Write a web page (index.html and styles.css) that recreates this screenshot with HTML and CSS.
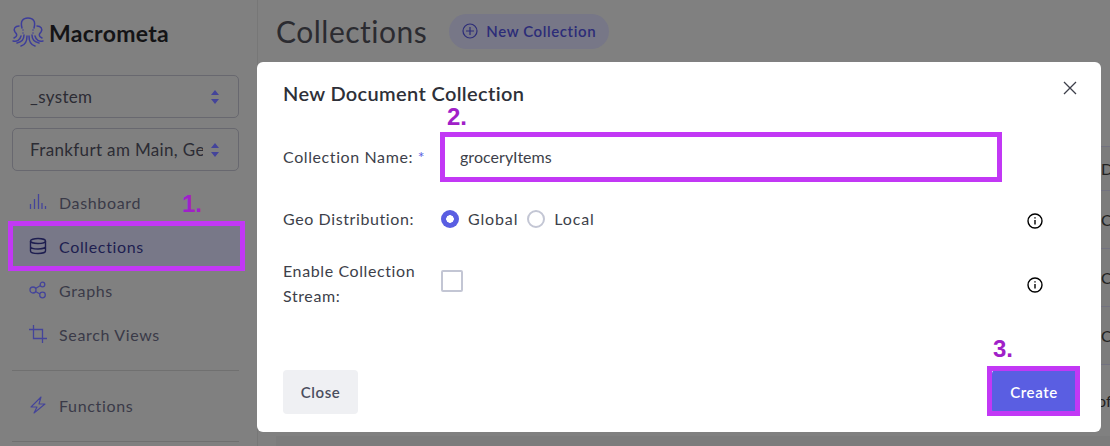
FILE: index.html
```html
<!DOCTYPE html>
<html lang="en">
<head>
    <meta charset="UTF-8">
    <meta name="viewport" content="width=device-width, initial-scale=1.0">
    <title>Macrometa Collections</title>
    <link rel="stylesheet" href="styles.css">
</head>
<body>
    <div class="app">
        <aside class="sidebar">
            <div class="logo">
                <svg class="logo-icon" viewBox="0 0 36 36" fill="none" stroke="currentColor" stroke-width="1.500" stroke-linecap="round">
                    <path d="M12 13C10 6 13 3 18 3s8 3 6 10"/>
                    <path d="M9 11C5 11 3 14 5 17c2 2 3 4-1 6"/>
                    <path d="M27 11c4 0 6 3 4 6-2 2-3 4 1 6"/>
                    <path d="M3 26c4 1 7-1 8-5"/>
                    <path d="M33 26c-4 1-7-1-8-5"/>
                    <path d="M14 20c0 4-2 7-7 8"/>
                    <path d="M22 20c0 4 2 7 7 8"/>
                    <path d="M17 21c0 5-2 9-6 10"/>
                    <path d="M19 21c0 5 2 9 6 10"/>
                    <path d="M13 15v.1M13 18v.1M23 15v.1M23 18v.1"/>
                </svg>
                <span class="logo-text">Macrometa</span>
            </div>
            <div class="picker">
                <span class="picker-text">_system</span>
                <svg class="picker-arrows" viewBox="0 0 10 16"><path d="M5 1l4 5H1zM5 15l4-5H1z"/></svg>
            </div>
            <div class="picker">
                <span class="picker-text">Frankfurt am Main, Germany</span>
                <svg class="picker-arrows" viewBox="0 0 10 16"><path d="M5 1l4 5H1zM5 15l4-5H1z"/></svg>
            </div>
            <nav class="nav">
                <a class="nav-item">
                    <svg class="nav-icon" viewBox="0 0 18 18" fill="none" stroke="currentColor" stroke-width="1.300"><path d="M1.500 16v-5M5.500 16V6M9.500 16V1M13 16v-6M16.500 16v-3"/></svg>
                    Dashboard
                </a>
                <a class="nav-item active">
                    <svg class="nav-icon" viewBox="0 0 18 18" fill="none" stroke="currentColor" stroke-width="1.400"><ellipse cx="9" cy="4" rx="7.500" ry="2.500"/><path d="M1.500 4v10c0 1.400 3.400 2.500 7.500 2.500s7.500-1.100 7.500-2.500V4M1.500 9.500C1.500 10.900 4.900 12 9 12s7.500-1.100 7.500-2.500"/></svg>
                    Collections
                </a>
                <a class="nav-item">
                    <svg class="nav-icon" viewBox="0 0 18 18" fill="none" stroke="currentColor" stroke-width="1.300"><circle cx="4" cy="9" r="3"/><circle cx="13.500" cy="3.500" r="2.300"/><circle cx="13.500" cy="14" r="2.800"/><path d="M6.500 7.500l5-3M6.500 10.500l4.500 2.500"/></svg>
                    Graphs
                </a>
                <a class="nav-item">
                    <svg class="nav-icon" viewBox="0 0 18 18" fill="none" stroke="currentColor" stroke-width="1.300"><path d="M4.500 0v13.500H18M0 4.500h13.500V18"/></svg>
                    Search Views
                </a>
            </nav>
            <hr class="divider">
            <nav class="nav">
                <a class="nav-item">
                    <svg class="nav-icon" viewBox="0 0 18 18" fill="none" stroke="currentColor" stroke-width="1.100" stroke-linejoin="round"><path d="M12 1L2 11h6l-3 6 11-9h-6z"/></svg>
                    Functions
                </a>
            </nav>
            <hr class="divider">
        </aside>

        <main class="content">
            <header class="page-head">
                <h1 class="page-title">Collections</h1>
                <button class="new-btn">
                    <svg class="new-icon" viewBox="0 0 16 16" fill="none" stroke="currentColor" stroke-width="1.200"><circle cx="8" cy="8" r="7"/><path d="M8 4v8M4 8h8"/></svg>
                    New Collection
                </button>
            </header>
            <div class="table">
                <div class="table-row head-row"></div>
                <div class="table-row">D</div>
                <div class="table-row tall">C</div>
                <div class="table-row tall">C</div>
                <div class="table-row tall">C</div>
                <div class="table-row foot-row">of</div>
            </div>
        </main>
    </div>

    <div class="overlay">
        <section class="modal">
            <svg class="modal-close" viewBox="0 0 14 14" fill="none" stroke="currentColor" stroke-width="1.300"><path d="M1 1l12 12M13 1L1 13"/></svg>
            <h2 class="modal-title">New Document Collection</h2>
            <div class="form">
                <label class="field-label name-label">Collection Name: <span class="req">*</span></label>
                <div class="name-input">groceryItems</div>

                <label class="field-label geo-label">Geo Distribution:</label>
                <div class="geo-control">
                    <span class="radio checked"></span><span class="radio-text">Global</span>
                    <span class="radio"></span><span class="radio-text">Local</span>
                    <svg class="info" viewBox="0 0 16 16" fill="none" stroke="#000" stroke-width="1.400"><circle cx="8" cy="8" r="7"/><path d="M8 7v4.500M8 4.200v1.300"/></svg>
                </div>

                <label class="field-label stream-label">Enable Collection Stream:</label>
                <div class="stream-control">
                    <span class="checkbox"></span>
                    <svg class="info" viewBox="0 0 16 16" fill="none" stroke="#000" stroke-width="1.400"><circle cx="8" cy="8" r="7"/><path d="M8 7v4.500M8 4.200v1.300"/></svg>
                </div>
            </div>
            <footer class="modal-foot">
                <button class="btn-close">Close</button>
                <button class="btn-create">Create</button>
            </footer>
        </section>

        <!-- tutorial marks drawn over the screenshot -->
        <div class="mark-box mark-nav"></div>
        <div class="mark-box mark-input"></div>
        <div class="mark-box mark-create"></div>
        <span class="mark-num num-1">1.</span>
        <span class="mark-num num-2">2.</span>
        <span class="mark-num num-3">3.</span>
    </div>
</body>
</html>
```

FILE: styles.css
```css
* {
    box-sizing: border-box;
}
html, body {
    height: 100%;
    margin: 0;
    overflow: hidden;
}
body {
    font-family: Lato, "Open Sans", sans-serif;
    background: #fff;
}
.app {
    display: flex;
    height: 446px;
    background: #808080;
}

/* sidebar */
.sidebar {
    width: 258px;
    flex: none;
    padding: 0 18px 0 12px;
    border-right: 1px solid #777;
}
.logo {
    display: flex;
    align-items: center;
    gap: 3px;
    height: 36px;
    margin: 15px 0 24px -2px;
}
.logo-icon {
    width: 36px;
    height: 36px;
    color: #3d3d9a;
}
.logo-text {
    font-size: 23px;
    font-weight: 700;
    letter-spacing: 0.3px;
    color: #141416;
}
.picker {
    display: flex;
    align-items: center;
    justify-content: space-between;
    width: 227px;
    height: 43px;
    margin-bottom: 10px;
    padding: 0 18px 0 17px;
    border: 1px solid #68686f;
    border-radius: 5px;
    color: #2c2c34;
    font-size: 17px;
    letter-spacing: 0.35px;
}
.picker-text {
    width: 173px;
    white-space: nowrap;
    overflow: hidden;
}
.picker-arrows {
    width: 10px;
    height: 16px;
    fill: #44449a;
    flex: none;
}
.nav {
    width: 228px;
}
.nav-item {
    display: flex;
    align-items: center;
    gap: 12px;
    height: 44px;
    padding-left: 17px;
    color: #3a3a48;
    font-size: 16px;
    letter-spacing: 0.65px;
}
.nav-item.active {
    background: #787888;
    color: #1e1e50;
}
.nav-icon {
    width: 18px;
    height: 18px;
    color: #44449a;
    flex: none;
}
.active .nav-icon {
    color: #1e1e50;
}
.divider {
    width: 227px;
    height: 1px;
    margin: 14px 0 12px;
    border: 0;
    background: #707070;
}
.nav:first-of-type {
    margin-top: -1px;
}

/* page behind the dialog */
.content {
    flex: 1;
    padding-left: 18px;
}
.page-head {
    display: flex;
    align-items: center;
    gap: 22px;
    height: 62px;
}
.page-title {
    margin: 0;
    font-size: 30px;
    font-weight: 400;
    letter-spacing: 0.5px;
    color: #2b2b30;
}
.new-btn {
    display: flex;
    align-items: center;
    gap: 8px;
    height: 35px;
    padding: 0 13px;
    border: 0;
    border-radius: 18px;
    background: #777787;
    color: #2c2c78;
    font: 600 15px Lato, sans-serif;
    letter-spacing: 0.6px;
}
.new-icon {
    width: 16px;
    height: 16px;
}
.table {
    height: 375px;
    background: #7c7c7c;
    font-size: 16px;
    color: #222;
}
.table-row {
    display: flex;
    align-items: center;
    width: 100%;
    height: 44px;
    padding-left: 825px;
    border-bottom: 1px solid #727280;
}
.head-row {
    height: 62px;
    margin-top: 23px;
    background: #808080;
}
.tall {
    height: 58px;
}
.foot-row {
    height: 71px;
    padding-left: 821px;
    border: 0;
    background: #808080;
}

/* dialog */
.overlay {
    position: absolute;
    inset: 0;
}
.modal {
    position: absolute;
    left: 257px;
    top: 62px;
    display: flex;
    flex-direction: column;
    width: 844px;
    height: 370px;
    padding: 20px 26px 18px;
    border-radius: 6px;
    background: #fff;
    color: #3d3f4a;
}
.modal-close {
    position: absolute;
    top: 19px;
    right: 24px;
    width: 14px;
    height: 14px;
    color: #3d3f4a;
}
.modal-title {
    margin: 0;
    font-size: 20px;
    font-weight: 600;
    line-height: 23px;
    letter-spacing: 0.35px;
    color: #2e3038;
}
.form {
    display: grid;
    grid-template-columns: 158px 1fr;
    margin-top: 32px;
    flex: 1;
    align-content: start;
}
.field-label {
    font-size: 16px;
    line-height: 25px;
    letter-spacing: 0.6px;
}
.req {
    color: #5a5ee2;
}
.name-label {
    align-self: center;
    margin-bottom: 2px;
}
.name-input {
    width: 552px;
    height: 40px;
    padding-left: 19px;
    font-size: 16px;
    line-height: 40px;
    letter-spacing: 0.05px;
}
.geo-label {
    margin-top: 29px;
}
.geo-control {
    display: flex;
    align-items: center;
    height: 25px;
    margin-top: 29px;
    font-size: 16px;
    letter-spacing: 0.85px;
}
.radio {
    width: 18px;
    height: 18px;
    flex: none;
    margin-right: 9px;
    border: 2px solid #c3c6d4;
    border-radius: 50%;
}
.radio.checked {
    border: 0;
    background: radial-gradient(circle, #fff 0 3.5px, #5a5ee2 4px);
}
.radio-text {
    margin-right: 9px;
}
.info {
    width: 16px;
    height: 16px;
    margin-left: auto;
    margin-right: 32px;
    flex: none;
}
.geo-control .info {
    margin-top: 4px;
}
.stream-label {
    width: 140px;
    margin-top: 27px;
}
.stream-control {
    display: flex;
    align-items: center;
    height: 50px;
    margin-top: 27px;
}
.checkbox {
    width: 22px;
    height: 22px;
    flex: none;
    margin-bottom: 5px;
    border: 2px solid #c3c6d4;
    border-radius: 2px;
}
.stream-control .info {
    margin-top: 3px;
}
.modal-foot {
    display: flex;
    align-items: center;
    justify-content: space-between;
    margin-right: -1px;
}
.btn-close, .btn-create {
    height: 44px;
    border: 0;
    border-radius: 4px;
    font: 600 15px Lato, sans-serif;
    letter-spacing: 0.6px;
}
.btn-close {
    width: 75px;
    background: #eff0f3;
    color: #4a4e5e;
}
.btn-create {
    width: 84px;
    background: #5a5ee2;
    color: #fff;
}

/* tutorial marks */
.mark-box {
    position: absolute;
    border: 5px solid #c238f5;
}
.mark-nav {
    left: 8px;
    top: 221px;
    width: 237px;
    height: 50px;
}
.mark-input {
    left: 440px;
    top: 132px;
    width: 562px;
    height: 50px;
}
.mark-create {
    left: 987px;
    top: 366px;
    width: 93px;
    height: 50px;
}
.mark-num {
    position: absolute;
    font-family: "Liberation Sans", sans-serif;
    font-size: 24px;
    font-weight: 700;
    line-height: 28px;
    color: #a020c8;
}
.num-1 {
    left: 182px;
    top: 190px;
}
.num-2 {
    left: 447px;
    top: 103px;
}
.num-3 {
    left: 993px;
    top: 335px;
}
```
